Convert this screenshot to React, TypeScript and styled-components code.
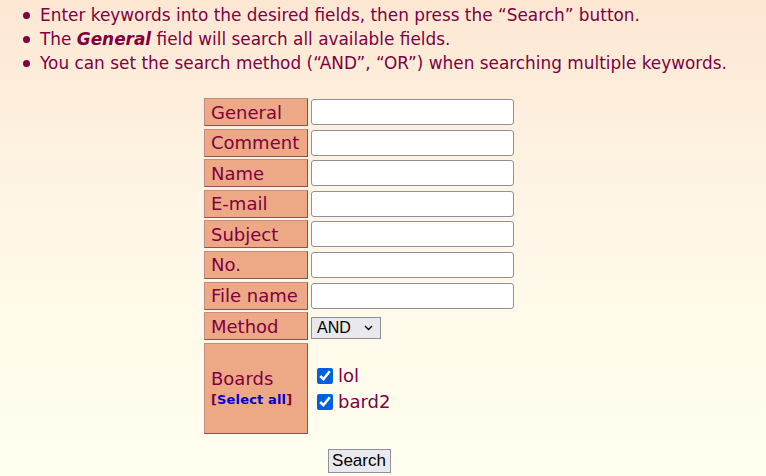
import React from "react"
import styled, { createGlobalStyle } from "styled-components"

/*==================== Global ====================*/

const GlobalStyle = createGlobalStyle`
    html, body {
        margin: 0;
        padding: 0;
    }

    body {
        min-height: 476px;
        background: linear-gradient(180deg, #fde7d3 0%, #fef6e6 45%, #fffff0 100%);
        font-family: "DejaVu Sans", "Noto Sans CJK JP", sans-serif;
        color: #800040;
    }
`

/*==================== Data ====================*/

const textFields = ["General", "Comment", "Name", "E-mail", "Subject", "No.", "File name"]

const boards = ["lol", "bard2"]

/*==================== Styles ====================*/

const Page = styled.div`
    padding-top: 3px;
`

const Notes = styled.ul`
    margin: 0;
    padding: 0 0 0 40px;
    list-style: none;
    font-size: 16.9px;
    line-height: 24px;

    li {
        position: relative;
    }

    li::before {
        content: "";
        position: absolute;
        left: -17px;
        top: 9px;
        width: 7px;
        height: 7px;
        border-radius: 50%;
        background: #800040;
    }

    em {
        font-style: italic;
        font-weight: bold;
    }
`

const Form = styled.div`
    margin: 23px 0 0 204px;
    width: 310px;
    display: flex;
    flex-direction: column;
    align-items: center;
`

const Grid = styled.div`
    width: 100%;
    display: grid;
    grid-template-columns: 104px 202px;
    grid-auto-rows: 28px;
    column-gap: 3px;
    row-gap: 2.6px;
`

const Label = styled.div<{ $tall?: boolean }>`
    grid-row: ${({ $tall }) => ($tall ? "span 3" : "auto")};
    box-sizing: border-box;
    height: ${({ $tall }) => ($tall ? "91px" : "auto")};
    display: flex;
    flex-direction: column;
    justify-content: center;
    padding: 1px 0 0 6px;
    background: #eda886;
    border: 1px solid;
    border-color: #c98a80 #8b5252 #8b5252 #c98a80;
    font-size: 18px;
    line-height: 22px;
    white-space: nowrap;
`

const Cell = styled.div<{ $tall?: boolean }>`
    grid-row: ${({ $tall }) => ($tall ? "span 3" : "auto")};
    height: ${({ $tall }) => ($tall ? "91px" : "auto")};
    display: flex;
    flex-direction: column;
    justify-content: center;
    align-items: flex-start;
`

const TextInput = styled.input`
    box-sizing: border-box;
    width: 203px;
    height: 26px;
    margin: 0;
    border: 1px solid #8f8f9d;
    border-radius: 3px;
    background: #fff;
`

const SelectWrap = styled.div`
    position: relative;
    margin-top: 3px;
`

const Select = styled.select`
    box-sizing: border-box;
    width: 70px;
    height: 22px;
    margin: 0;
    padding: 0 0 0 5px;
    appearance: none;
    border: 1px solid #8f8f9d;
    border-radius: 0;
    background: #e9e9ed;
    color: #000;
    font-family: "Liberation Sans", Arial, sans-serif;
    font-size: 16px;
`

const Chevron = styled.svg`
    position: absolute;
    right: 8px;
    top: 8px;
    width: 9px;
    height: 6px;
    pointer-events: none;
`

const SelectAll = styled.span`
    font-size: 13px;
    line-height: 20px;
    font-weight: bold;
    letter-spacing: 0.15px;

    a {
        color: #0000d0;
        text-decoration: none;
    }
`

const BoardList = styled.div`
    display: flex;
    flex-direction: column;
    gap: 4px;
    padding: 1px 0 0 6px;
`

const BoardItem = styled.label`
    display: flex;
    align-items: center;
    gap: 5px;
    font-size: 18px;
    line-height: 22px;
`

const Check = styled.input`
    width: 16px;
    height: 16px;
    margin: 0;
    accent-color: #0060df;
`

const SubmitButton = styled.button`
    margin-top: 17px;
    width: 63px;
    height: 24px;
    padding: 0;
    border: 1px solid #8f8f9d;
    border-radius: 0;
    background: #e9e9ed;
    color: #000;
    font-family: "Liberation Sans", Arial, sans-serif;
    font-size: 17px;
`

/*==================== Component ====================*/

const App = () => (
    <>
        <GlobalStyle />
        <Page>
            <Notes>
                <li>Enter keywords into the desired fields, then press the “Search” button.</li>
                <li>
                    The <em>General</em> field will search all available fields.
                </li>
                <li>You can set the search method (“AND”, “OR”) when searching multiple keywords.</li>
            </Notes>

            <Form>
                <Grid>
                    {textFields.map(field => (
                        <React.Fragment key={field}>
                            <Label>{field}</Label>
                            <Cell>
                                <TextInput type="text" />
                            </Cell>
                        </React.Fragment>
                    ))}

                    <Label>Method</Label>
                    <Cell>
                        <SelectWrap>
                            <Select defaultValue="AND">
                                <option>AND</option>
                                <option>OR</option>
                            </Select>
                            <Chevron viewBox="0 0 9 6">
                                <path d="M1 1l3.5 3.5L8 1" fill="none" stroke="#000" strokeWidth="1.4" />
                            </Chevron>
                        </SelectWrap>
                    </Cell>

                    <Label $tall>
                        <span>Boards</span>
                        <SelectAll>
                            [<a href="#">Select all</a>]
                        </SelectAll>
                    </Label>
                    <Cell $tall>
                        <BoardList>
                            {boards.map(board => (
                                <BoardItem key={board}>
                                    <Check type="checkbox" defaultChecked />
                                    {board}
                                </BoardItem>
                            ))}
                        </BoardList>
                    </Cell>
                </Grid>

                <SubmitButton type="button">Search</SubmitButton>
            </Form>
        </Page>
    </>
)

export default App
